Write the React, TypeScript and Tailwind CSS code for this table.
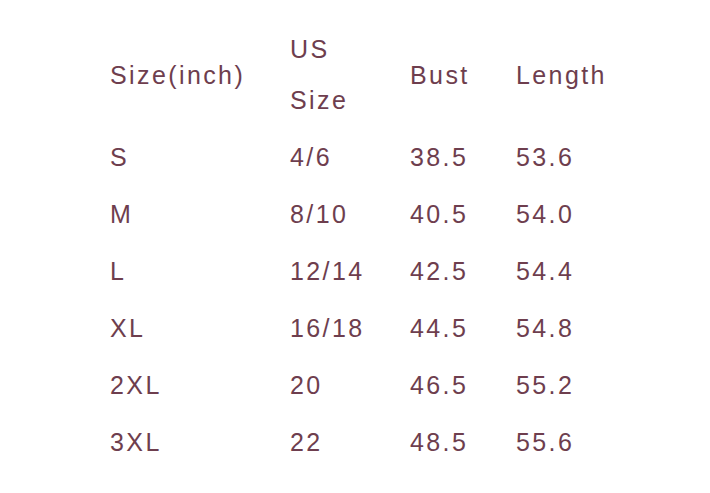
const header = { size: "Size(inch)", bust: "Bust", length: "Length" };

const rows = [
  { size: "S", us: "4/6", bust: "38.5", length: "53.6" },
  { size: "M", us: "8/10", bust: "40.5", length: "54.0" },
  { size: "L", us: "12/14", bust: "42.5", length: "54.4" },
  { size: "XL", us: "16/18", bust: "44.5", length: "54.8" },
  { size: "2XL", us: "20", bust: "46.5", length: "55.2" },
  { size: "3XL", us: "22", bust: "48.5", length: "55.6" },
];

export default function App() {
  return (
    <div
      className="w-[710px] h-[493px] bg-white pt-[21px] pl-[110px] text-[25px] tracking-[2.4px] text-[#6e3e4e] leading-[51px]"
      style={{ fontFamily: '"Liberation Sans", Arial, sans-serif' }}
    >
      <div className="flex items-center py-[3px]">
        <div className="w-[180px]">{header.size}</div>
        <div className="w-[120px]">
          US
          <br />
          Size
        </div>
        <div className="w-[106px]">{header.bust}</div>
        <div>{header.length}</div>
      </div>
      {rows.map((r) => (
        <div key={r.size} className="flex items-center py-[3px]">
          <div className="w-[180px]">{r.size}</div>
          <div className="w-[120px]">{r.us}</div>
          <div className="w-[106px]">{r.bust}</div>
          <div>{r.length}</div>
        </div>
      ))}
    </div>
  );
}
